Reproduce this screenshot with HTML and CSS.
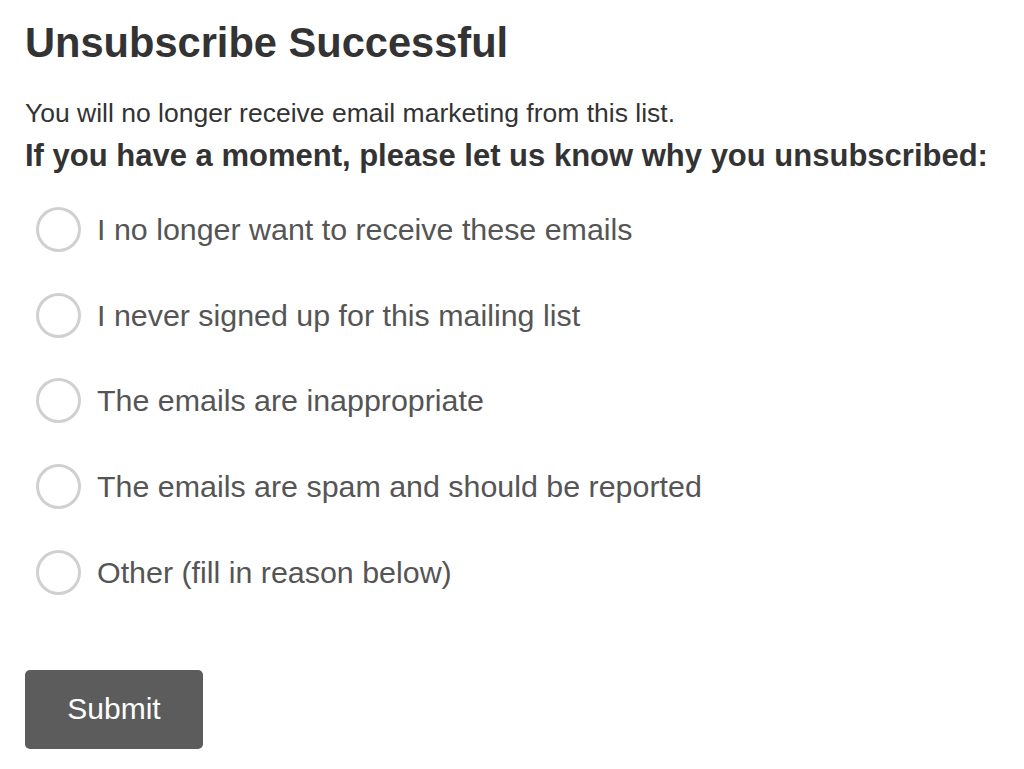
FILE: index.html
```html
<!DOCTYPE html>
<html>
<head>
<meta charset="utf-8">
<link rel="stylesheet" href="styles.css">
</head>
<body>
<div class="page">
  <h1 class="title">Unsubscribe Successful</h1>
  <p class="info">You will no longer receive email marketing from this list.</p>
  <p class="ask">If you have a moment, please let us know why you unsubscribed:</p>
  <form class="reasons">
    <label class="reason"><span class="radio"></span><span class="label">I no longer want to receive these emails</span></label>
    <label class="reason"><span class="radio"></span><span class="label">I never signed up for this mailing list</span></label>
    <label class="reason"><span class="radio"></span><span class="label">The emails are inappropriate</span></label>
    <label class="reason"><span class="radio"></span><span class="label">The emails are spam and should be reported</span></label>
    <label class="reason"><span class="radio"></span><span class="label">Other (fill in reason below)</span></label>
    <div class="actions"><button type="button" class="submit">Submit</button></div>
  </form>
</div>
</body>
</html>
```
FILE: styles.css
```css
html, body {
  margin: 0;
  padding: 0;
  background: #ffffff;
}
body {
  font-family: "Liberation Sans", Arial, Helvetica, sans-serif;
  color: #333333;
}
.page {
  padding: 18px 25px 0 25px;
}
.title {
  margin: 0;
  font-size: 41.6px;
  line-height: 50px;
  font-weight: bold;
  color: #333333;
}
.info {
  margin: 29px 0 0 0;
  font-size: 26.5px;
  line-height: 32px;
  color: #333333;
}
.ask {
  margin: 10px 0 0 0;
  font-size: 31px;
  line-height: 34px;
  font-weight: bold;
  color: #333333;
}
.reasons {
  display: flex;
  flex-direction: column;
  margin-top: 14px;
}
.reason {
  display: flex;
  align-items: center;
  height: 85.6px;
  gap: 16px;
  padding-left: 11px;
}
.radio {
  flex: none;
  box-sizing: border-box;
  width: 45px;
  height: 45px;
  border: 3px solid #d0d0d0;
  border-radius: 50%;
}
.label {
  font-size: 30.4px;
  color: #555555;
}
.actions {
  margin-top: 55px;
}
.submit {
  width: 178px;
  height: 79px;
  border: none;
  border-radius: 5px;
  background: #5c5c5c;
  color: #ffffff;
  font-family: "Liberation Sans", Arial, Helvetica, sans-serif;
  font-size: 30px;
  padding: 0;
}
```
